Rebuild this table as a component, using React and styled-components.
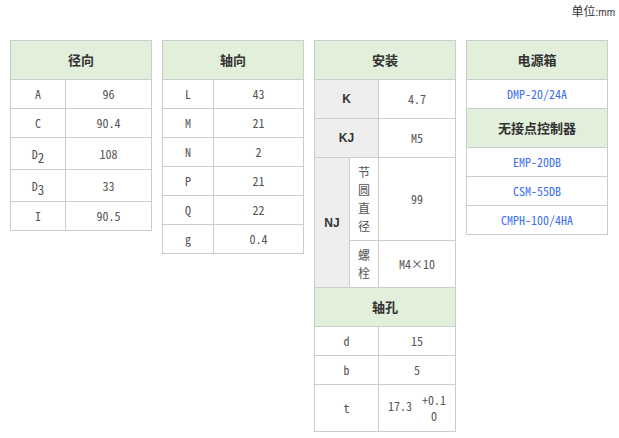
import React from "react";
import styled, { createGlobalStyle } from "styled-components";

const Global = createGlobalStyle`
  html, body { margin: 0; padding: 0; background: #fff; }
  body {
    font-family: "Noto Sans Mono CJK SC", "Noto Sans CJK SC", "Liberation Mono", monospace;
    font-size: 12px;
    color: #555;
  }
`;

const Page = styled.div`
  width: 619px;
  height: 438px;
  box-sizing: border-box;
  padding: 0 4px 0 10px;
`;

const Unit = styled.div`
  height: 40px;
  box-sizing: border-box;
  padding-top: 3px;
  text-align: right;
  line-height: 16px;
  color: #333;
  font-family: "Noto Sans CJK SC", sans-serif;
  font-size: 12px;
`;

const UnitSmall = styled.span`
  font-size: 10px;
  font-family: "Liberation Sans", sans-serif;
`;

const Row = styled.div`
  display: flex;
  align-items: flex-start;
  gap: 10px;
`;

const Table = styled.table`
  width: ${(p) => p.$w}px;
  border-collapse: collapse;
  table-layout: fixed;
  border: 1px solid #ccc;
`;

const Th = styled.th`
  background: #e2efda;
  border: 1px solid #ccc;
  padding: 10px 0;
  line-height: 18px;
  font-family: "Noto Sans CJK SC", sans-serif;
  font-weight: bold;
  font-size: 13px;
  color: #333;
  text-align: center;
`;

const Td = styled.td`
  border: 1px solid #ccc;
  padding: ${(p) => p.$pad || "5px 0"};
  line-height: 18px;
  text-align: center;
  vertical-align: middle;
  font-size: 12px;
  color: ${(p) => (p.$link ? "#3b6ff0" : "#555")};
  word-break: break-all;
`;

const Label = styled.td`
  border: 1px solid #ccc;
  background: #eee;
  padding: 10px 0;
  line-height: 18px;
  text-align: center;
  vertical-align: ${(p) => p.$valign || "middle"};
  font-family: "Liberation Sans", sans-serif;
  font-weight: bold;
  font-size: 12px;
  color: #333;
`;

const VText = styled.td`
  border: 1px solid #ccc;
  padding: 5px 7px;
  line-height: 18px;
  text-align: center;
  font-family: "Noto Sans CJK SC", sans-serif;
  font-size: 12px;
  color: #555;
  word-break: break-all;
`;

const Sub = styled.span`
  font-size: 13px;
  line-height: 0;
  vertical-align: -4px;
`;

const Tol = styled.span`
  display: inline-block;
  vertical-align: middle;
  line-height: 16px;
  text-align: center;
  margin-left: 4px;
`;

const radial = [
  ["A", "96"],
  ["C", "90.4"],
  [<>D<Sub>2</Sub></>, "108", true],
  [<>D<Sub>3</Sub></>, "33", true],
  ["I", "90.5"],
];

const axial = [
  ["L", "43"],
  ["M", "21"],
  ["N", "2"],
  ["P", "21"],
  ["Q", "22"],
  ["g", "0.4"],
];

const controllers = ["EMP-20DB", "CSM-55DB", "CMPH-100/4HA"];

function PairTable({ title, rows, cols }) {
  return (
    <Table $w={141}>
      <colgroup>
        <col style={{ width: cols[0] }} />
        <col style={{ width: cols[1] }} />
      </colgroup>
      <thead>
        <tr>
          <Th colSpan={2}>{title}</Th>
        </tr>
      </thead>
      <tbody>
        {rows.map(([k, v, tall], i) => (
          <tr key={i}>
            <Td $pad={tall ? "7px 0 6px" : undefined}>{k}</Td>
            <Td $pad={tall ? "7px 0 6px" : undefined}>{v}</Td>
          </tr>
        ))}
      </tbody>
    </Table>
  );
}

export default function App() {
  return (
    <Page>
      <Global />
      <Unit>
        单位<UnitSmall>:mm</UnitSmall>
      </Unit>
      <Row>
        <PairTable title="径向" rows={radial} cols={[55, 86]} />
        <PairTable title="轴向" rows={axial} cols={[51, 90]} />
        <Table $w={141}>
          <colgroup>
            <col style={{ width: 35 }} />
            <col style={{ width: 29 }} />
            <col style={{ width: 77 }} />
          </colgroup>
          <tbody>
            <tr>
              <Th colSpan={3}>安装</Th>
            </tr>
            <tr>
              <Label colSpan={2}>K</Label>
              <Td>4.7</Td>
            </tr>
            <tr>
              <Label colSpan={2}>KJ</Label>
              <Td>M5</Td>
            </tr>
            <tr>
              <Label rowSpan={2}>NJ</Label>
              <VText>节圆直径</VText>
              <Td>99</Td>
            </tr>
            <tr>
              <VText>螺栓</VText>
              <Td>M4×10</Td>
            </tr>
            <tr>
              <Th colSpan={3}>轴孔</Th>
            </tr>
            <tr>
              <Td colSpan={2}>d</Td>
              <Td>15</Td>
            </tr>
            <tr>
              <Td colSpan={2}>b</Td>
              <Td>5</Td>
            </tr>
            <tr>
              <Td colSpan={2} $pad="7px 0">t</Td>
              <Td $pad="7px 0">
                17.3 <Tol>+0.1<br />0</Tol>
              </Td>
            </tr>
          </tbody>
        </Table>
        <Table $w={142}>
          <tbody>
            <tr>
              <Th>电源箱</Th>
            </tr>
            <tr>
              <Td $link>DMP-20/24A</Td>
            </tr>
            <tr>
              <Th>无接点控制器</Th>
            </tr>
            {controllers.map((c) => (
              <tr key={c}>
                <Td $link>{c}</Td>
              </tr>
            ))}
          </tbody>
        </Table>
      </Row>
    </Page>
  );
}
